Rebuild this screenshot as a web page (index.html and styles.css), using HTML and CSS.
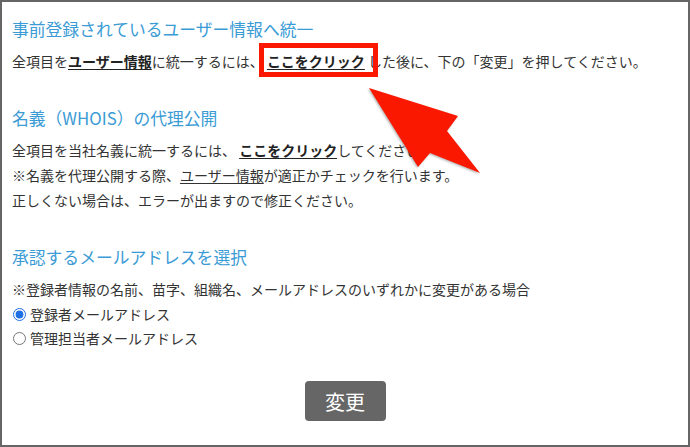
FILE: index.html
```html
<!DOCTYPE html>
<html lang="ja">
<head>
<meta charset="utf-8">
<title>ユーザー情報</title>
<link rel="stylesheet" href="styles.css">
</head>
<body>
<div class="page">
  <section class="sec">
    <h2>事前登録されているユーザー情報へ統一</h2>
    <p>全項目を<a class="lnk strong" href="#">ユーザー情報</a>に統一するには、 <a class="lnk strong" href="#">ここをクリック</a> した後に、下の「変更」を押してください。</p>
  </section>
  <section class="sec">
    <h2>名義（WHOIS）の代理公開</h2>
    <p>全項目を当社名義に統一するには、 <a class="lnk strong" href="#">ここをクリック</a>してください。</p>
    <p>※名義を代理公開する際、<a class="lnk" href="#">ユーザー情報</a>が適正かチェックを行います。</p>
    <p>正しくない場合は、エラーが出ますので修正ください。</p>
  </section>
  <section class="sec last">
    <h2>承認するメールアドレスを選択</h2>
    <p>※登録者情報の名前、苗字、組織名、メールアドレスのいずれかに変更がある場合</p>
    <label class="opt"><input type="radio" name="mail" checked>登録者メールアドレス</label>
    <label class="opt"><input type="radio" name="mail">管理担当者メールアドレス</label>
  </section>
  <div class="actions"><button class="btn" type="button">変更</button></div>

  <div class="hlbox"></div>
  <svg class="arrow" viewBox="0 0 116 90" width="116" height="90" aria-hidden="true">
    <polygon points="1,1 90,29 79,44 112,86 62,66 50,80" fill="#fa1900"/>
  </svg>
</div>
</body>
</html>
```

FILE: styles.css
```css
body {
  margin: 0;
  font-family: "Noto Sans CJK JP", "Noto Sans", sans-serif;
  background: #fff;
}

.page {
  box-sizing: border-box;
  width: 690px;
  height: 447px;
  border: 2px solid #666;
  padding: 15px 10px 0;
  position: relative;
  background: #fff;
  color: #333;
  font-size: 14px;
  overflow: hidden;
}

.sec {
  margin-bottom: 32px;
}

.sec.last {
  margin-bottom: 0;
}

.sec h2 {
  margin: 0 0 8px;
  font-size: 16.8px;
  line-height: 24px;
  font-weight: normal;
  color: #3a9bd5;
}

.sec p {
  margin: 0;
  line-height: 25px;
  white-space: nowrap;
}

.lnk {
  color: #333;
  text-decoration: underline;
  text-underline-offset: 2px;
}

.lnk.strong {
  font-weight: 700;
  color: #222;
}

.opt {
  display: flex;
  align-items: center;
  height: 24px;
}

.opt input {
  width: 13px;
  height: 13px;
  margin: 0 4px 0 1px;
  accent-color: #1f6fe5;
}

.actions {
  display: flex;
  justify-content: center;
  margin-top: 31px;
}

.btn {
  width: 81px;
  height: 40px;
  border: none;
  border-radius: 4px;
  background: #666;
  color: #fff;
  font-family: "Noto Sans CJK JP", "Noto Sans", sans-serif;
  font-size: 20px;
  padding: 0;
}

.hlbox {
  position: absolute;
  left: 257px;
  top: 41px;
  width: 119px;
  height: 34px;
  box-sizing: border-box;
  border: 5px solid #fa1900;
}

.arrow {
  position: absolute;
  left: 366px;
  top: 85px;
  filter: drop-shadow(-1px 1px 1px rgba(0, 0, 0, 0.3));
}
```
